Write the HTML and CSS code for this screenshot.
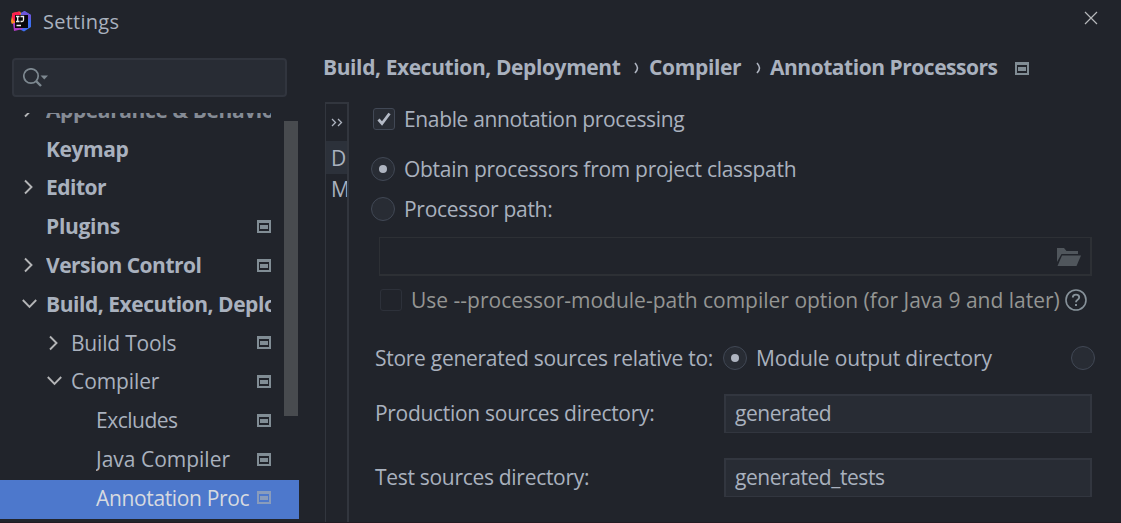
FILE: index.html
```html
<!DOCTYPE html>
<html lang="en">
<head>
<meta charset="utf-8">
<title>Settings</title>
<link rel="stylesheet" href="styles.css">
</head>
<body>
<svg class="defs" width="0" height="0">
  <symbol id="proj" viewBox="0 0 14 13"><path fill-rule="evenodd" d="M0 0h14v13H0zM2 3v8h10V3z" fill="currentColor"/><path d="M3 5h8v4H3z" fill="currentColor"/></symbol>
  <symbol id="right" viewBox="0 0 16 16"><path d="M4 1.500 10.500 8 4 14.500" fill="none" stroke="currentColor" stroke-width="1.900"/></symbol>
  <symbol id="down" viewBox="0 0 16 16"><path d="M1.800 4 8.500 10.800 15.200 4" fill="none" stroke="currentColor" stroke-width="1.900"/></symbol>
</svg>
<div class="window">
  <header class="titlebar">
    <svg class="logo" width="21" height="21" viewBox="0 0 21 21">
      <path d="M1.500 2 9 .5l5 8L6 14 .5 12.500 0 10z" fill="#fa8a22"/>
      <path d="M1.500 2 8 .5l3 6-8 4L1 6z" fill="#fd1c50"/>
      <path d="M10 2 13.500 0 20 4v12l-7 4.500L8 18z" fill="#3f6ff0"/>
      <path d="M10 2 13.500 0 20 4l-.5 5-7-3z" fill="#7054d8"/>
      <path d="M2 12h5l5 6-9 2z" fill="#b03cc4"/>
      <path d="M4 4h13v13H4z" fill="#08070a"/>
      <path d="M5 5.500h3.500M6.700 5.500v5M5 10.500h3.500M9.500 5.500h3v3.500q0 1.500-1.500 1.500H9.500M5.500 14.500h4.500" fill="none" stroke="#eee" stroke-width="1.300"/>
    </svg>
    <span class="title">Settings</span>
    <svg class="close" width="14" height="14" viewBox="0 0 14 14"><path d="m1 1 12 12M13 1 1 13" stroke="#b6b8ba" stroke-width="1.200"/></svg>
  </header>
  <div class="body">
    <aside class="sidebar">
      <div class="search">
        <svg width="27" height="20" viewBox="0 0 27 20"><circle cx="8" cy="8" r="7.200" fill="none" stroke="#7d8890" stroke-width="1.700"/><path d="m13 13 5 5" stroke="#7d8890" stroke-width="2.400"/><path d="M17.500 7.500h7.500l-3.750 4z" fill="#7d8890"/></svg>
      </div>
      <div class="tree-area">
        <ul class="tree">
          <li class="row bold clip"><svg class="arrow"><use href="#right"/></svg><span class="label l1">Appearance &amp; Behavior</span></li>
          <li class="row bold"><i class="arrow"></i><span class="label l2">Keymap</span></li>
          <li class="row bold"><svg class="arrow"><use href="#right"/></svg><span class="label l3">Editor</span></li>
          <li class="row bold"><i class="arrow"></i><span class="label l4">Plugins</span><svg class="proj"><use href="#proj"/></svg></li>
          <li class="row bold"><svg class="arrow"><use href="#right"/></svg><span class="label l5">Version Control</span><svg class="proj"><use href="#proj"/></svg></li>
          <li class="row bold"><svg class="arrow"><use href="#down"/></svg><span class="label l6">Build, Execution, Deployment</span></li>
          <li class="row level2"><svg class="arrow"><use href="#right"/></svg><span class="label l7">Build Tools</span><svg class="proj"><use href="#proj"/></svg></li>
          <li class="row level2"><svg class="arrow"><use href="#down"/></svg><span class="label l8">Compiler</span><svg class="proj"><use href="#proj"/></svg></li>
          <li class="row level3"><span class="label l9">Excludes</span><svg class="proj"><use href="#proj"/></svg></li>
          <li class="row level3"><span class="label l10">Java Compiler</span><svg class="proj"><use href="#proj"/></svg></li>
          <li class="row level3 selected"><span class="label l11">Annotation Proc</span><svg class="proj"><use href="#proj"/></svg></li>
        </ul>
        <div class="scrollbar"></div>
      </div>
    </aside>
    <main class="main">
      <div class="crumbs">
        <span class="c1">Build, Execution, Deployment</span>
        <svg class="sep" width="5" height="12" viewBox="0 0 5 12"><path d="M1 1q2.500 3 2.500 5T1 11" fill="none" stroke="#aeb4c0" stroke-width="1.600"/></svg>
        <span class="c2">Compiler</span>
        <svg class="sep" width="5" height="12" viewBox="0 0 5 12"><path d="M1 1q2.500 3 2.500 5T1 11" fill="none" stroke="#aeb4c0" stroke-width="1.600"/></svg>
        <span class="c3">Annotation Processors</span>
        <svg class="proj"><use href="#proj"/></svg>
      </div>
      <div class="content">
        <div class="profiles">
          <div class="more"><svg width="12" height="9" viewBox="0 0 12 9"><path d="m1 1 3.500 3.500L1 8M7 1l3.500 3.500L7 8" fill="none" stroke="#aeb4c0" stroke-width="1.300"/></svg></div>
          <div class="profile on">D</div>
          <div class="profile">M</div>
        </div>
        <div class="form">
          <label class="line enable"><span class="check"><svg width="14" height="14" viewBox="0 0 14 14"><path d="m1.500 7.500 3.500 4L12.500 1.500" fill="none" stroke="#b4bac6" stroke-width="2.800"/></svg></span><span class="t1">Enable annotation processing</span></label>
          <label class="line obtain"><span class="radio on"></span><span class="t2">Obtain processors from project classpath</span></label>
          <label class="line path"><span class="radio"></span><span class="t3">Processor path:</span></label>
          <div class="pathfield"><svg width="24" height="18" viewBox="0 0 24 18"><path d="M0 0h7l2.500 3H21v3H4.500L0 14z" fill="#50565c"/><path d="M5 7.500h19L19.500 18H.5z" fill="#50565c"/></svg></div>
          <div class="line module"><span class="check off"></span><span class="t4">Use --processor-module-path compiler option (for Java 9 and later)</span><span class="help"><svg width="22" height="22" viewBox="0 0 22 22"><circle cx="11" cy="11" r="10" fill="none" stroke="#87929a" stroke-width="1.600"/><path d="M7.800 8.600q0-3 3.200-3t3.200 2.700q0 1.500-1.600 2.500T11 13.300M11 15v2" fill="none" stroke="#87929a" stroke-width="1.900"/></svg></span></div>
          <div class="line store"><span class="t5">Store generated sources relative to:</span><span class="radio on"></span><span class="t6">Module output directory</span><span class="radio last"></span></div>
          <div class="line dir prod"><span class="t7">Production sources directory:</span><div class="field"><span class="t8">generated</span></div></div>
          <div class="line dir"><span class="t9">Test sources directory:</span><div class="field"><span class="t10">generated_tests</span></div></div>
        </div>
      </div>
    </main>
  </div>
</div>
</body>
</html>
```
FILE: styles.css
```css
* { box-sizing: border-box; }
body { margin: 0; background: #21242b; color: #a9b1be; font: 21px/28px "Open Sans", "Noto Sans", sans-serif; }
svg { display: block; flex: none; }
.defs { position: absolute; }
.window { width: 1121px; height: 523px; overflow: hidden; display: flex; flex-direction: column; border-bottom: 1px solid #211b23; }
.titlebar { height: 46px; flex: none; display: flex; align-items: flex-start; padding: 11px 23px 0 11px; }
.title { margin: -3px 0 0 11px; font-size: 20px; letter-spacing: .25px; }
.close { margin-left: auto; }
.body { flex: 1; min-height: 0; display: flex; }
.sidebar { width: 299px; flex: none; display: flex; flex-direction: column; padding-top: 12px; }
.search { width: 275px; height: 39px; flex: none; margin-left: 12px; padding: 8px 0 0 9px; border: 2px solid #31353e; border-radius: 4px; background: #282c34; }
.tree-area { flex: 1; min-height: 0; margin-top: 16px; overflow: hidden; display: grid; grid-template-columns: 299px; }
.tree, .scrollbar { grid-area: 1 / 1; }
.tree { list-style: none; margin: -21px 0 0; padding: 0; }
.row { display: flex; align-items: center; height: 38.800px; padding: 0 28px 3px 21px; white-space: nowrap; }
.row.bold { font-weight: 700; }
.row.clip { color: #858b95; padding-bottom: 2px; }
.arrow { width: 16px; height: 16px; flex: none; margin-right: 9px; color: #b4b5b7; }
.label { flex: 1; min-width: 0; overflow: hidden; }
.row .proj { margin-left: 6px; }
.proj { width: 14px; height: 13px; color: #818d95; }
.level2 { padding-left: 46px; }
.level3 { padding-left: 96px; }
.selected { background: #4d78cc; color: #d7dae0; }
.selected .proj { color: #899cbc; }
.l1, .l2 { letter-spacing: -.4px; }
.l3, .l5 { letter-spacing: -.5px; }
.l4 { letter-spacing: -.3px; }
.l6 { letter-spacing: -.45px; }
.l7 { letter-spacing: -.2px; }
.l8 { letter-spacing: -.1px; }
.l9 { letter-spacing: -.5px; }
.l11 { letter-spacing: -.35px; overflow: visible; }
.scrollbar { justify-self: end; width: 14px; height: 295px; margin: 8px 1px 0 0; background: #484b4f; }
.main { flex: 1; min-width: 0; padding: 8px 0 0 24px; white-space: nowrap; }
.crumbs { height: 28px; display: flex; align-items: center; font-weight: 700; }
.c1, .c2, .c3 { flex: none; margin-top: -2px; }
.c1 { width: 311px; letter-spacing: -.4px; }
.c2 { width: 107px; letter-spacing: -.35px; }
.c3 { width: 245px; letter-spacing: -.47px; }
.crumbs .sep { margin-right: 10px; }
.crumbs .sep + .c3 { margin-left: -1px; }
.content { display: flex; margin-top: 20px; padding-left: 2px; }
.profiles { width: 24px; height: 430px; flex: none; overflow: hidden; border: solid #32363e; border-width: 2px 2px 0 1px; }
.more { height: 37px; padding: 14px 0 0 5px; }
.profile { height: 33px; padding-left: 5px; line-height: 34px; font-size: 21px; }
.profile.on { background: #2c313a; }
.profile:last-child { line-height: 30px; }
.form { width: 772px; flex: none; padding-left: 22px; }
.line { display: flex; align-items: center; }
.check { width: 22px; height: 22px; flex: none; display: grid; place-items: center; border: 1px solid #414855; border-radius: 3px; background: #282c34; }
.check.off { border-color: #2d313a; background: none; margin-right: 9px; }
.radio { width: 24px; height: 24px; flex: none; display: grid; place-items: center; border: 1px solid #414855; border-radius: 50%; background: #282c34; }
.radio.on::after { content: ""; width: 8px; height: 8px; border-radius: 50%; background: #aeb4c0; }
.enable { height: 34px; padding-left: 2px; }
.enable .check { margin-right: 9px; }
.obtain, .path { height: 40px; gap: 9px; }
.obtain { margin-top: 13px; }
.pathfield { width: 713px; height: 39px; margin: 8px 0 0 8px; padding: 10px 0 0 677px; border: 1px solid #2d3035; border-bottom-width: 2px; border-right-width: 2px; }
.module { height: 30px; margin-top: 9px; padding-left: 9px; color: #949593; }
.t1 { letter-spacing: -.35px; }
.t2, .t3 { letter-spacing: -.29px; }
.t4 { width: 654px; }
.store { height: 30px; margin-top: 28px; padding-left: 4px; }
.t5 { width: 348px; letter-spacing: -.28px; }
.t6 { width: 315px; margin-left: 9px; letter-spacing: -.15px; }
.dir { height: 39px; padding-left: 4px; }
.t7, .t9 { width: 349px; margin-top: -1px; letter-spacing: -.3px; }
.prod { margin: 21px 0 25px; }
.field { width: 368px; height: 39px; padding: 3px 0 0 9px; border: 2px solid #32363f; border-bottom-width: 1px; background: #282c34; }
.t8, .t10 { letter-spacing: -.45px; }
```
